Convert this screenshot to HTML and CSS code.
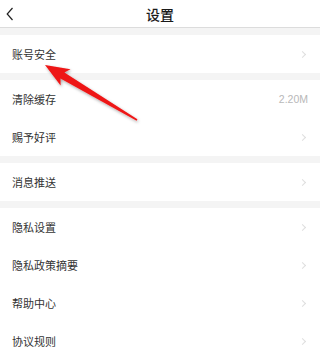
FILE: index.html
```html
<!DOCTYPE html>
<html lang="zh">
<head>
<meta charset="utf-8">
<link rel="stylesheet" href="styles.css">
</head>
<body>
<div class="page">
  <header class="topbar">
    <span class="back"><svg width="8" height="14" viewBox="0 0 8 14"><path d="M6.5 1 L1.2 7 L6.5 13" fill="none" stroke="#222" stroke-width="1.2"/></svg></span>
    <h1 class="title">设置</h1>
  </header>
  <div class="group">
    <div class="row"><span class="label">账号安全</span><span class="chev"></span></div>
  </div>
  <div class="group">
    <div class="row"><span class="label">清除缓存</span><span class="value">2.20M</span></div>
    <div class="row"><span class="label">赐予好评</span><span class="chev"></span></div>
  </div>
  <div class="group">
    <div class="row"><span class="label">消息推送</span><span class="chev"></span></div>
  </div>
  <div class="group">
    <div class="row"><span class="label">隐私设置</span><span class="chev"></span></div>
    <div class="row"><span class="label">隐私政策摘要</span><span class="chev"></span></div>
    <div class="row"><span class="label">帮助中心</span><span class="chev"></span></div>
    <div class="row"><span class="label">协议规则</span><span class="chev"></span></div>
  </div>
  <svg class="pointer" width="280" height="360" viewBox="0 0 280 360">
    <defs>
      <filter id="sh" x="-20%" y="-20%" width="140%" height="140%">
        <feDropShadow dx="1" dy="1.5" stdDeviation="1.5" flood-color="#000" flood-opacity="0.35"/>
      </filter>
    </defs>
    <polygon filter="url(#sh)" fill="#ee1515" points="45,65 70.5,69.2 64.4,72.5 137.4,119.3 136.6,120.7 60.5,78.6 60.6,85.5"/>
  </svg>
</div>
</body>
</html>
```
FILE: styles.css
```css
html, body {
  margin: 0;
  padding: 0;
  background: #f4f4f4;
}
.page {
  position: relative;
  width: 100%;
  height: 360px;
  overflow: hidden;
  background: #f4f4f4;
  font-family: "Noto Sans CJK SC", "Noto Sans", sans-serif;
  display: flex;
  flex-direction: column;
  gap: 7px;
}
.topbar {
  height: 27px;
  border-bottom: 1px solid #dcdcdc;
  background: #fff;
  display: flex;
  align-items: center;
  justify-content: center;
  position: relative;
}
.back {
  position: absolute;
  left: 6px;
  top: 7px;
  display: flex;
}
.title {
  margin: 0;
  font-size: 14px;
  font-weight: 500;
  color: #1a1a1a;
  line-height: 1;
}
.group {
  background: #fff;
  display: flex;
  flex-direction: column;
}
.row {
  height: 38px;
  display: flex;
  align-items: center;
  justify-content: space-between;
  padding: 0 14px 0 12px;
}
.label {
  font-size: 11px;
  color: #333;
  line-height: 1;
}
.value {
  font-family: "Liberation Sans", Arial, sans-serif;
  font-size: 10.5px;
  color: #b8b8b8;
  margin-right: -2px;
}
.chev {
  width: 4px;
  height: 4px;
  border-top: 1px solid #dedede;
  border-right: 1px solid #dedede;
  transform: rotate(45deg);
  margin-right: 1px;
}
.pointer {
  position: absolute;
  left: 0;
  top: 0;
  pointer-events: none;
}
```
